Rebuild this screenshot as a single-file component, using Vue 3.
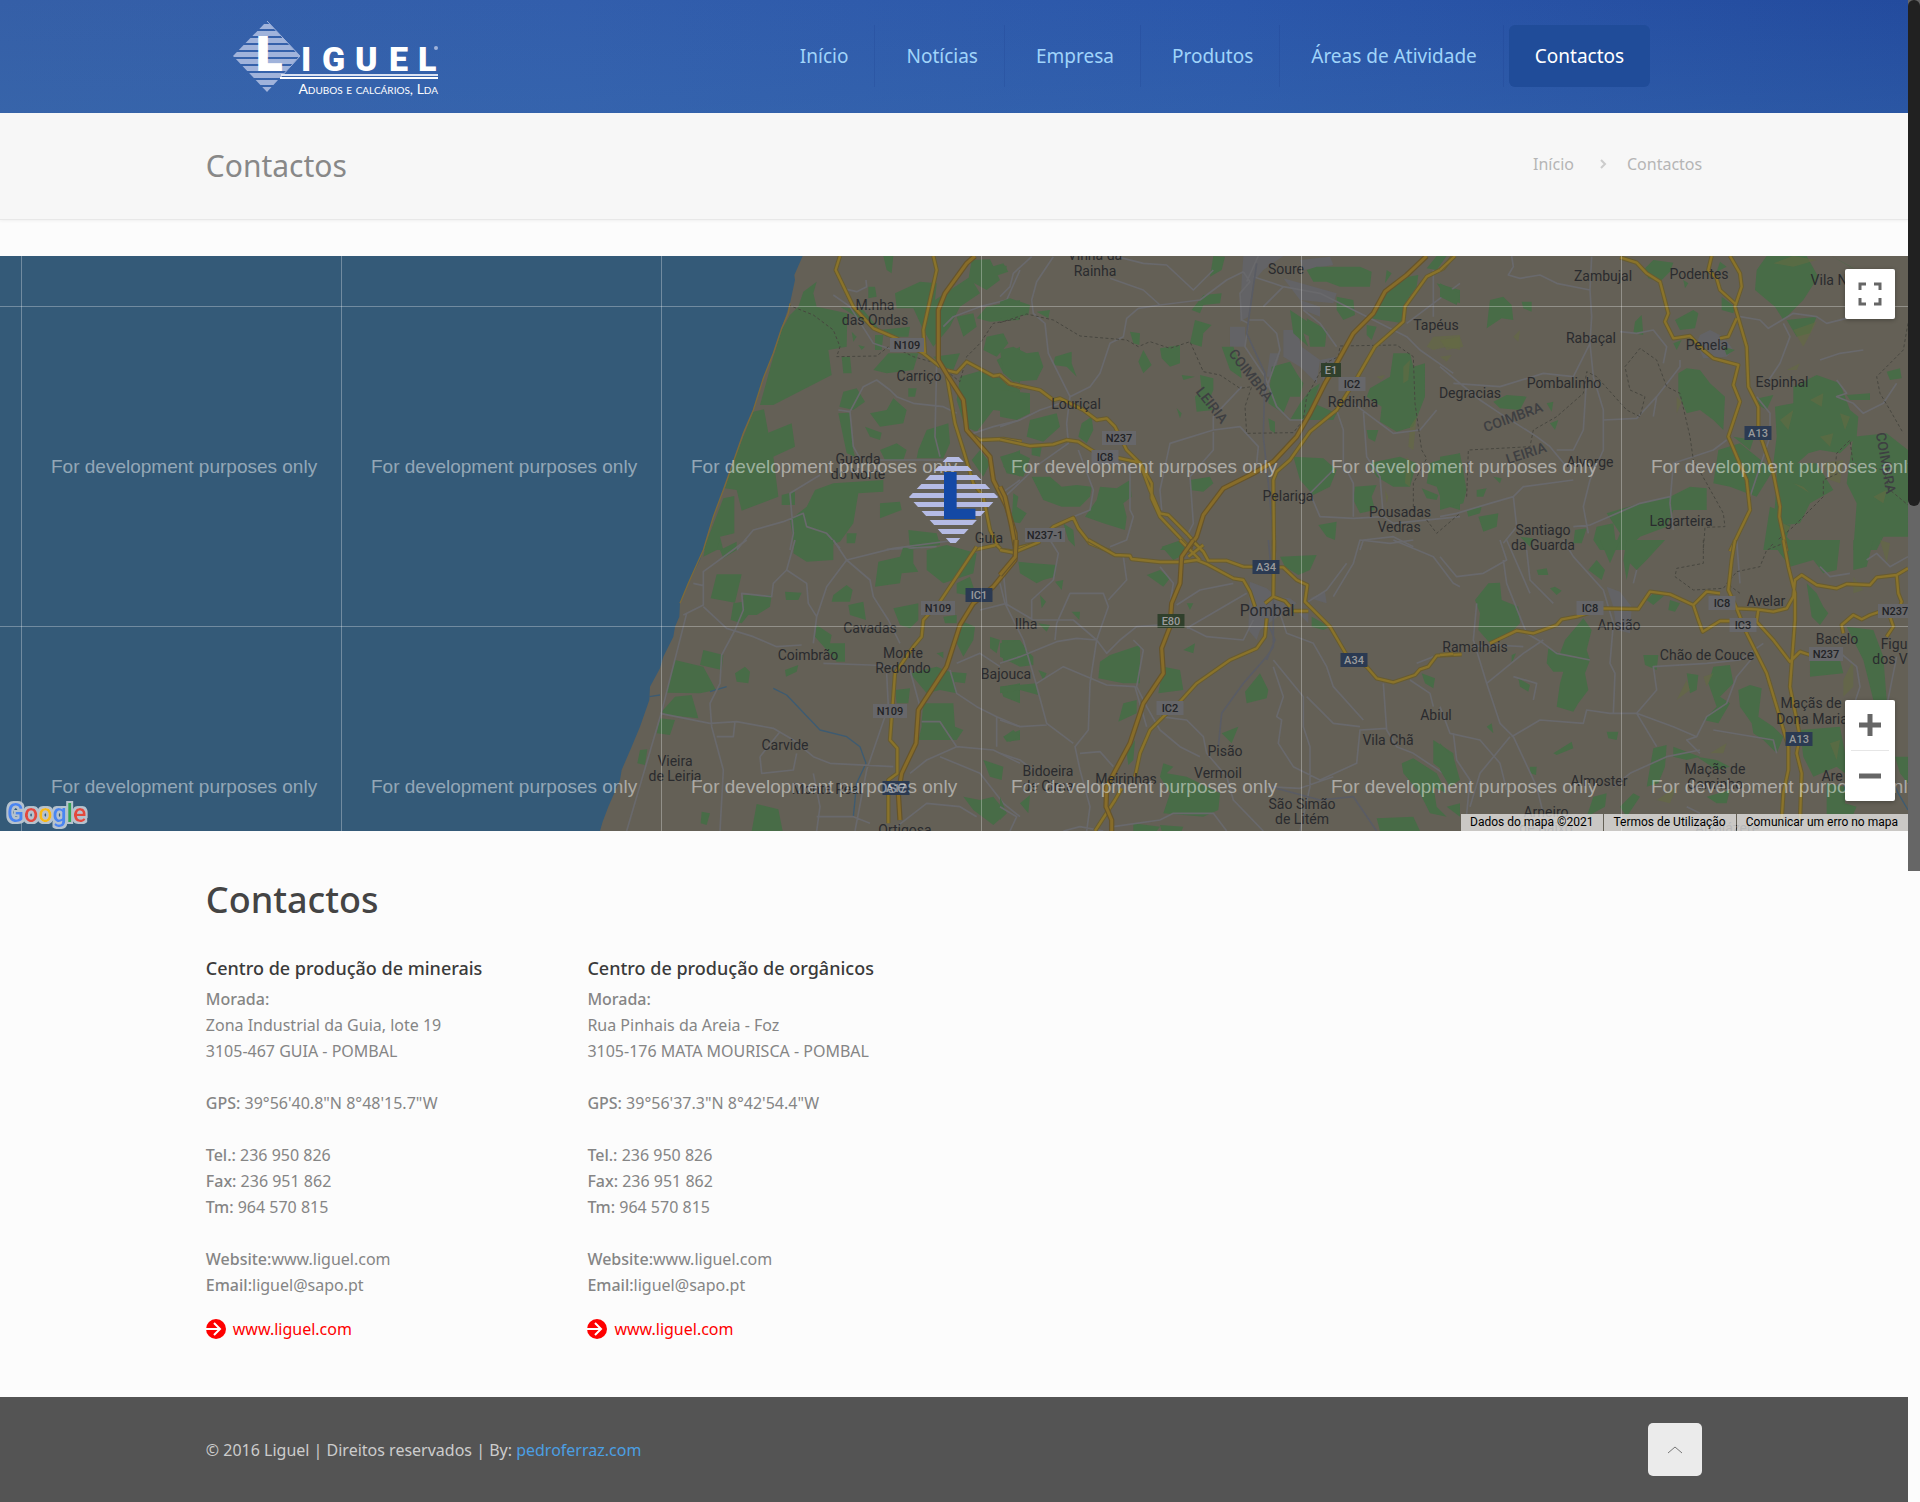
<script setup>
const navItems = [
  { label: 'Início' },
  { label: 'Notícias' },
  { label: 'Empresa' },
  { label: 'Produtos' },
  { label: 'Áreas de Atividade' },
  { label: 'Contactos', active: true },
]

const centres = [
  {
    title: 'Centro de produção de minerais',
    address: ['Zona Industrial da Guia, lote 19', '3105-467 GUIA - POMBAL'],
    gps: '39°56\'40.8"N 8°48\'15.7"W',
  },
  {
    title: 'Centro de produção de orgânicos',
    address: ['Rua Pinhais da Areia - Foz', '3105-176 MATA MOURISCA - POMBAL'],
    gps: '39°56\'37.3"N 8°42\'54.4"W',
  },
]

const watermarkX = [51, 371, 691, 1011, 1331, 1651]
const watermarkY = [473, 793]
const gridX = [21, 341, 661, 981, 1301, 1621]
const gridY = [306, 626]
const stripes = [0, 1, 2, 3, 4, 5, 6, 7, 8, 9]

// Each tile is drawn in its own space, three units to a map pixel.
const tiles = [
  {
    x: 560, y: 250,
    green: 'M770 95L730 125 715 170 690 195 665 240 640 320 600 465 640 465 815 375 805 300 860 290 862 190 770 170 760 130ZM580 485L612 478 625 548 695 520 705 590 640 620 655 740 545 782 530 720 495 715 520 635ZM490 745L523 738 523 850 480 860 490 900H430ZM970 18H1000L995 70 980 60ZM1235 30L1290 28 1320 90 1280 120 1225 90ZM1280 55L1330 40 1345 65 1300 80ZM1005 130L1080 95 1130 100 1125 150 1230 80 1260 130 1200 170 1170 230 1120 290 1090 240 1060 175 1010 175ZM840 170L910 180 960 240 1050 230 1045 260 980 260 930 225ZM1190 200L1240 190 1250 230 1210 260ZM1280 170L1380 150V210L1290 215 1250 205ZM1280 260L1330 250 1345 280 1310 320 1270 300ZM1310 330L1380 290V400L1330 370ZM1200 380L1270 360 1330 390 1380 420V490L1300 480 1250 545 1215 530 1190 450ZM1120 320L1200 310 1180 360 1150 350ZM850 425L890 415 915 455 880 480 838 470ZM835 490L870 488 880 600 885 620 860 610ZM930 490L980 480 1000 445 1040 480 1030 520 960 530ZM915 530L965 548 960 570 930 560ZM1075 600L1100 540 1165 520 1170 580 1150 625H1070ZM960 600L1010 580 1040 600 1030 630H975ZM820 700L970 690 970 725 895 730 880 820 840 875 760 900H705L690 810 740 770 765 720ZM665 735L705 725V765H665ZM1340 620L1380 600V680L1330 650ZM960 760L1020 755 1025 780 960 805ZM1045 840L1130 850 1140 885 1050 900ZM1260 600L1290 640 1270 680 1235 630ZM940 360L985 310 1075 310 1060 360 980 370ZM845 320H870L875 370H850ZM945 255H970L965 300H945ZM860 850H890L885 880H860ZM1045 415H1070L1065 440H1045ZM925 110H945L950 140 925 145ZM895 285L915 290 905 300ZM875 245L890 260 880 275Z',
    minor: 'M530 900L580 840 670 815 730 790 740 830 800 850 840 895M690 900L700 850 690 730 780 675M835 480L870 485 910 410 950 390 990 420 1010 440 1060 460 1150 470 1190 490M870 485L880 590 900 625M860 118L890 125 920 110 918 90M1380 510L1300 530 1240 550M1130 340L1125 560 1140 620M960 630H1200M1150 230L1180 200 1260 170 1340 150 1380 60M1310 740L1380 690M820 135L870 170 940 280 1000 300M1130 890L980 898',
    border: 'M685 165L760 195 820 240 840 290 830 320 950 318 985 290M1000 290L1060 320 1130 340 1200 395 1220 320 1260 280 1300 220 1380 205',
    road: 'M840 18L827 60 880 170 940 235 1010 265 1090 310 1140 350M1160 375L1185 520 1210 600 1240 700 1270 740 1290 840 1315 890M1120 18L1130 60 1110 150 1090 240 1095 310M1155 360L1190 368 1220 335 1300 378 1320 375 1345 400 1385 412M1225 550L1260 570 1330 567 1385 575M1240 900L1310 885',
    motorway: 'M1245 18L1220 40 1155 130 1135 180V330L1165 380 1210 450 1220 540 1290 620 1300 690 1340 770 1365 850 1368 904',
  },
  {
    x: 1000, y: 250,
    city: 'M730 18H850L790 60 760 95 745 200 720 215 725 90ZM690 230H735V290H690ZM850 240H890L905 290 960 330 950 400 900 350 850 320ZM810 310H840L820 380H800ZM850 85L1010 130 1000 160 900 150ZM900 150L960 170 960 200 910 180ZM900 30L990 20 1000 45 910 60ZM960 330L1010 320 970 400Z',
    green: 'M0 45L20 48 18 65 0 68ZM0 155L30 145 90 165 85 195 0 205ZM110 185L150 180 145 205ZM0 300L40 290 80 310 115 305 130 350 110 390 40 395 10 370ZM165 320L215 305 215 340 230 380 200 350 160 345ZM0 420L90 430V490L50 510 0 500ZM90 510L170 490 180 530 130 575 80 560ZM245 520L275 500 280 540 260 580 235 560ZM95 595L125 590 120 620 95 615ZM0 620L50 605 90 625 70 680 20 670ZM40 730L55 740 50 770 80 790 60 820 35 815ZM95 680L150 680 185 710 230 705 275 710 270 740 240 770 185 770 130 750ZM300 710L350 715 390 690 395 740 370 760 380 800 375 840 310 820 255 800 290 750ZM190 820L220 840 225 890 205 870ZM390 245L420 250 418 285 400 280ZM585 210L635 225 610 250 605 290 570 280ZM480 295L540 285V340L510 350 485 325ZM430 300L455 345 430 370 415 335ZM600 375L640 385V420L625 455 640 480 590 485 585 440 605 420ZM665 290L700 290 720 340 725 385 690 360ZM530 475L545 490 540 505ZM570 690L630 680 640 700 610 725 570 720ZM640 18L675 20 665 60 630 80ZM610 135L665 130 660 160 610 165 600 190 575 180ZM920 60L950 50 1080 50 1115 65 1110 110 1020 110 980 95 940 95ZM1160 60L1175 70 1155 100ZM1200 85L1255 75 1250 110 1215 160 1210 220 1110 205 1150 140ZM1310 18H1340L1310 60 1280 55ZM1310 100L1380 120V160L1340 145ZM1010 140L1060 150 1065 195 1030 210 1010 180ZM870 180L930 220 930 260 910 250 925 290 880 250ZM920 205L980 240 975 290 930 290ZM1100 225L1130 230 1115 270 1100 255ZM815 350L870 335 890 370 910 400 900 440 870 440 850 490 805 460ZM930 420L960 400 940 460 1010 490 1000 510 870 510 900 460ZM1180 310L1230 310 1240 350 1275 340V440L1240 530 1190 545 1140 515 1145 470 1100 440 1110 415 1170 380ZM1100 540H1135L1125 575 1105 565ZM805 505L825 515 825 550 810 540ZM880 620L970 625 1010 660 990 710 940 735 900 690ZM1105 640L1200 620 1250 640 1230 710 1180 710 1130 680ZM1290 640L1380 610V780L1330 765 1310 710 1280 700ZM1065 710L1130 705 1115 740 1125 780 1080 790 1060 750ZM1265 715L1315 735 1310 750 1280 745ZM955 825L1010 815 1005 870 980 860ZM490 890L545 870 550 900H480ZM545 375L585 380 550 390Z',
    scrub: 'M1280 290L1300 260 1380 255V300L1340 290 1300 300ZM1210 350L1230 330 1225 390 1210 400ZM1230 530L1250 500 1240 600 1225 590ZM1220 620L1235 640 1230 710 1215 700ZM1155 720L1165 740 1160 760ZM1320 320L1355 315 1340 335ZM1130 380L1155 375 1145 390Z',
    minor: 'M0 140L30 110 40 70 95 20M160 20L110 95 95 150 100 190 135 220 145 310 210 440 200 520 205 580 120 640 20 735M210 440L270 410 300 370 330 280 370 260 380 205 415 175 480 165 600 150 680 90 730 65M480 165L430 120 330 85M350 20L430 40 500 45 580 120 640 60M730 65L750 95 720 130 725 210 745 220 735 290 795 380 830 470 870 510 910 510M745 210L790 210 830 250 840 300 790 440M760 80L850 110 960 130 1080 190 1220 260 1260 300 1360 370M850 110L790 170M910 180L960 220 1010 290M0 530L60 510 120 480 210 450M235 600L280 720 270 780 220 800M390 640L390 780 400 800 380 870 330 890M640 540L510 580 480 720 485 780M640 545L640 600 570 680 580 820 560 860M640 540L720 530 775 590 770 640M725 410L640 500V540M1010 480L1030 540 1030 640 1060 700 1060 800M1090 480L1100 620 1140 680 1150 800M1000 660L930 730 960 800 1060 805 1150 800 1180 820 1380 800M1080 900L1090 870 1180 860 1240 890M1300 60V200M1220 220L1380 100M1060 460L1180 550 1260 540 1310 480M775 18L740 95',
    rail: 'M795 370L790 560 805 700 820 860M770 40L740 250 795 370',
    border: 'M0 218L80 192 160 210 240 258 380 270 415 290 450 275 510 295 570 275 610 365 660 375 720 415 755 410 735 470 740 550 880 548 910 510 920 440 975 340 1015 320 1020 288 1190 285 1240 320 1245 460 1265 600 1280 625 1240 700V800M1280 810L1310 850 1380 790',
    road: 'M0 375L30 400 120 420 160 450 180 445 250 480 290 510 320 505 345 530 380 600 420 640 450 720 480 790 505 795 560 850 608 904M0 568L90 588 160 583 200 570 235 575 290 610 420 638 455 700V745L480 800 575 900M48 895L110 880 160 830 220 803 235 835 270 880 330 904M1360 18L1330 55 1280 80 1215 170 1210 215 1125 290 1070 385 1010 480 930 545 870 630 830 665 820 690 822 904',
    motorway: 'M0 710L15 740 35 830 48 904M1280 18L1220 75 1155 125 1120 190 1060 250 1010 340 975 400 930 490 890 560 820 635 760 670 670 715 610 795 590 860 560 904',
  },
  {
    x: 1440, y: 250,
    city: 'M780 255L810 240 850 260 880 300 860 320 790 325 770 280Z',
    green: 'M0 100L60 130 50 165 0 140ZM150 150L190 140 215 165 220 210 185 205 140 235 145 190ZM245 155L275 155 275 185 250 175ZM615 55L640 30 700 38 690 65 660 95 625 85ZM705 210L760 180 775 190 765 235 720 240ZM585 215L605 195 610 255 580 250ZM840 35L860 50 830 65ZM730 90L745 100 735 115ZM950 60L980 18H1100L1135 80 1090 150 1030 210 1005 170 945 120ZM845 140L885 170 880 190 845 180ZM1040 210L1130 200 1110 250 1070 260ZM1175 18L1250 60 1230 50ZM1340 365L1380 355 1385 385 1350 390ZM700 280L725 270 710 300ZM850 290L885 300 860 315ZM715 370L740 355 780 360 810 400 855 440 850 540 820 510 780 480 740 490 715 430ZM160 455L200 435 260 440 240 480 180 475ZM320 460L340 455 335 485ZM330 520L355 510 345 540ZM955 445L1000 435 980 480 955 465ZM1005 470L1060 460 1060 410 1130 375 1200 400 1230 480 1255 500 1250 560 1200 610 1140 600 1105 610 1060 650 1000 640 1010 560ZM1220 435L1290 430 1290 450 1230 450ZM835 600L900 580 1000 660 950 740 870 710 820 700ZM1010 640L1130 640 1180 720 1110 760 1080 820 1000 830 1010 700ZM1240 560L1340 550 1404 600V860L1330 860 1310 900H1240L1250 760 1220 700ZM990 770L1060 800 1040 860 1080 900H970ZM80 780L125 770 120 790 85 800ZM115 800L175 790 170 830 130 845ZM0 620L60 610 80 720 70 760 0 780ZM110 720L140 715 130 740 110 740ZM500 790L600 760 690 740 750 710 800 715 800 780 700 780 680 830 600 860 560 900H520L540 850ZM470 830L520 820 530 900H480L460 870ZM405 840L440 835 425 880 400 880ZM240 860L280 865 270 890ZM160 680L185 685 180 700ZM880 560L940 570 930 600Z',
    scrub: 'M1000 40L1060 18 1130 30 1060 50ZM0 270L60 260 70 290 20 300ZM1060 240L1130 215 1090 290ZM1020 510L1060 480 1045 540ZM1110 450L1150 430 1145 470ZM1140 560L1180 550 1170 590ZM1200 490L1230 500 1215 540ZM710 440L725 455 710 490ZM1010 810L1050 830 1040 850ZM1150 640L1210 630 1200 700 1170 690ZM220 260L240 240 235 275ZM1300 740L1340 720 1330 760ZM1060 700L1090 710 1110 730ZM1040 360L1080 340 1070 360Z',
    minor: 'M215 18L220 50 205 75 240 85 300 75 350 100 450 120 455 20M450 120L455 200 450 280 400 380 310 370 180 410 40 400M450 280L460 380 490 480V600L450 690 430 770 445 850M440 380L430 540 400 600 350 600M490 510L590 505 650 440 720 350V330M540 245L590 250 640 240 680 290 670 340M900 200L960 210 985 235 1060 190 1130 200 1160 220 1240 200M1030 220L1050 260 1020 340 980 400M1140 330L1200 310 1270 300M1190 390L1220 430 1190 440 1240 460 1270 490 1330 460 1370 400M0 350L120 450 180 490 290 560 330 590 380 650M860 570L820 600 700 640 690 760 700 840M0 800L50 790 150 760 220 740 250 710 400 690M220 740L230 830 190 880M990 560L930 740M400 830L450 825 600 760 690 740M950 440L990 490 990 560M640 500L650 440',
    border: 'M80 740L85 600 270 590 280 540 350 500 430 430 440 365 470 380 560 480 600 500 615 440 570 420 555 350 600 295 650 330 680 410 720 430 750 560 760 630 800 700 850 790 855 830 795 832 790 900M1404 220L1390 300 1310 380 1320 430 1350 480 1390 550M1185 660L1190 610 1230 570 1240 650 1150 690 1150 740 1060 830 990 890M1240 640L1330 660 1350 720 1404 765',
    road: 'M540 22L590 38 620 70 660 95 685 190 675 215 700 265 750 258 790 300 820 325 895 345 880 405 900 455 865 560 920 690 930 780 870 904M870 18L900 70 905 110 885 170 920 290 925 410 955 470V540L1000 670 1020 770 1018 800 1040 904M815 18L805 60 830 85 840 120 890 165M890 205L865 260 840 265M0 60L45 18',
    motorway: '',
  },
  {
    x: 560, y: 540,
    green: 'M440 0L480 0 470 30 430 50ZM480 30L530 5 530 30 490 55ZM470 103H545L525 188 452 175ZM550 165L635 165 630 200 590 225 565 225 545 250 512 240 520 190 550 185ZM675 155L725 158 715 180 678 180ZM705 0H820V60L740 65 700 40ZM860 135L878 150 870 185 815 185 820 165ZM865 195L910 185 918 240 870 225ZM955 65L1020 50 1030 20 1060 30 1060 70 1075 95 1025 100 1020 130 945 140ZM1000 205L1075 190 1075 240 1050 265 1020 255ZM1050 10L1140 0 1140 15ZM1100 30L1160 15 1250 40 1240 100 1150 130 1100 90ZM1190 130L1230 110 1250 170 1190 160ZM1150 230L1190 225 1190 250 1155 250ZM1210 245L1245 260 1240 300 1210 350 1190 310ZM345 360L430 380 468 450 420 460 320 458ZM430 330L490 345 485 390 420 375ZM525 400L555 380 570 395 565 430 530 425ZM675 390L715 375 710 395 678 410ZM770 255L815 285 810 310 855 310V365L830 365 800 330 765 290ZM305 515L345 470 395 465 415 535 320 525ZM300 535L345 540 330 585 290 580ZM240 630L262 628 255 675 232 670ZM1050 400L1130 380 1180 400 1190 460 1140 450 1100 460ZM1005 450L1050 445 1045 490H1010ZM1090 490L1180 490 1185 560 1210 570 1190 600 1075 600 1085 560 1085 545ZM1290 290L1320 300 1310 340 1290 325ZM1325 300L1380 300V360L1330 365ZM1130 340L1150 335 1150 355ZM1165 395L1220 400 1215 430 1180 425ZM1320 440L1380 430V490L1330 470ZM1330 590L1380 570V600L1340 605ZM1270 660L1330 680 1325 720 1290 710ZM1210 770L1260 780 1300 770 1340 820 1300 855 1240 810ZM425 815L450 820 440 855 422 850ZM590 792L655 808 668 873H575Z',
    minor: 'M560 0L430 95V195L370 225M430 200L500 265 580 290 650 320 725 315M705 0L680 90 640 130 635 170 545 160 550 210 525 270 485 345 480 430 450 490 455 560 490 690 480 873M680 90L740 130 745 190 770 230 760 310M770 230L800 140 860 60M820 0L860 60 930 120 940 170 985 240 1020 310M860 60L1000 25 1190 0M380 220L305 515 200 873M300 520L450 550 530 545 640 565 700 600 760 650 810 670 1000 680M470 590H520L525 545M790 370L930 375 1020 380M600 650L605 700 700 690 710 640M660 575L600 650M980 400L985 500 920 690 885 873M1085 545L1140 545 1190 620 1100 660 1050 700M1380 670L1300 630 1190 620M1140 650L1260 700 1330 790 1380 830M1010 860L1100 790 1200 800 1250 830M770 873L780 800 760 700M770 830L880 830 930 850M1190 370L1260 340 1320 380M1170 390L1190 460 1250 500 1310 530 1380 560M1310 530V620M400 130L430 137M1260 210L1340 190 1330 100M1050 390L1080 500',
    water: 'M268 470L300 465M450 455L500 440M640 445L680 465 780 570 860 590 900 620 918 670 890 730 880 830',
    border: '',
    road: 'M1250 20L1140 185 1090 240 1085 290 1060 320 1005 400 990 600 1012 625V700L985 720V850M1310 15L1325 30 1366 36',
    motorway: 'M1368 0L1365 60 1300 140 1240 190 1200 255 1160 380 1075 510 1068 610 1025 700 1015 760 1020 840',
  },
  {
    x: 1000, y: 540,
    city: 'M750 125L800 145 830 170 870 175 890 190 820 240 780 270 770 300 745 270ZM930 175L975 155 980 190ZM895 220L925 215 925 250Z',
    green: 'M55 65L100 70 170 75 165 110 130 120 110 130 60 100ZM165 125L190 120 185 150ZM120 165L138 185 125 205ZM215 215L240 215 238 240ZM115 250L150 255 140 275ZM0 310L60 300 80 330 100 350V375L60 380 0 350ZM330 345L420 315V430L370 430 295 415 300 365ZM485 20L545 0 560 40 520 60ZM440 105L480 90 510 115 490 140ZM560 190L580 190 570 210ZM550 330L585 310 580 340ZM490 380L540 390 550 450 475 460ZM370 490L410 480 410 520 355 545ZM0 440L110 430 115 465 60 450 0 460ZM10 590L40 570 60 590 30 605ZM780 400L805 450 800 475 740 490 735 455ZM665 580L715 560 695 610ZM380 640L405 600 400 660 385 675ZM490 670L520 680 500 700 560 710 660 760 655 810 610 830 490 820 510 760 480 710ZM60 790L90 765 85 820ZM0 770L20 820 0 840ZM400 850L480 860 470 873H400ZM480 855L550 860 545 873H485ZM840 50L950 45 930 90 895 105 855 80ZM935 230L990 260 970 270 935 260ZM1265 400L1305 415 1300 445 1275 430ZM1300 600L1360 640 1365 720 1300 670ZM1205 670L1240 655 1310 700 1340 760 1300 740 1310 800 1340 830 1290 820 1260 760 1210 700ZM1130 835L1240 830 1260 873H1140ZM1340 800L1380 790V830ZM115 390L140 400 130 420Z',
    minor: 'M0 130L15 190 100 240 220 240 290 300 270 430 265 570 225 620 240 690 270 800 260 873M95 240L95 180 160 120 175 40 150 0M165 300L170 250 210 160 310 160 325 200 290 300 320 340 360 300 410 260 475 255M15 190L70 300 105 420 140 550 220 610M0 370L60 350 170 305 230 295 290 300M110 430L190 380 320 435 405 440 440 560M370 50L380 120 325 180M480 80L520 130 510 190M530 195L600 150 700 130M560 260L620 290 730 300 760 240M560 265L740 160M400 300L430 330 410 440 440 500 480 570 540 620 600 650M480 530L560 540 610 590 620 640 680 710 700 780 790 873M820 380L850 470 830 530 845 540 835 610 880 680 960 720 1070 670 1080 570 1160 565M920 470L1000 550 1080 560M820 360L910 470V560L930 620V740L900 873M840 220L860 280 940 310 980 380 1000 440 1090 540M1150 430L1160 570 1190 620 1240 640 1330 700M1230 420L1290 460 1300 500M1000 170L1060 70 1080 0 1170 10 1240 0M925 185L980 150 1040 70M1180 0L1300 50 1360 130 1380 140M1250 370L1300 350M0 640L60 660 100 690M240 640L300 635 340 680M310 873L240 860 190 873M340 860L480 840 520 820 640 820 680 873M800 740L900 745 1000 710M0 800L50 830 30 873M0 540L60 560 140 555',
    rail: 'M805 0L820 160 820 320 800 350 730 430 665 520 655 620M800 240L825 300 800 360M810 740L960 780 1060 770 1130 873',
    border: '',
    road: 'M265 0L345 45 390 47 395 57 480 66 545 66 590 60 620 72 700 115 730 120 750 155 765 200M540 0L560 20 600 60M565 50L610 15M580 5L610 35 625 62 680 62 730 80 850 82 890 120 922 135 915 185 990 260 1040 345 1100 380 1130 415 1180 427 1245 405 1260 388 1285 380 1310 347 1385 343M822 0L820 170 795 190M820 170L855 183 870 200M880 213H925M800 235L795 290 770 325 690 360 590 430 540 485 490 530 450 570 420 640 405 710M365 745L345 780 285 873M0 30L40 38 120 5',
    motorway: 'M48 0L46 50 0 105M580 0L545 50 540 130 515 190 510 260 485 325 490 400 430 490 390 610 320 740 318 800 335 840V873',
  },
  {
    x: 1440, y: 540,
    city: 'M500 140L540 155 575 200 570 280 530 270 520 200Z',
    green: 'M145 130L180 128 185 180 235 200 240 250 200 290 150 310 115 270 120 220 105 180ZM330 145L345 140 365 152 350 165ZM290 90L320 85 325 105 295 105ZM430 235L455 270 440 330 450 360 435 400 445 450 415 490 400 515 350 500 360 430 370 395 340 395 320 370 325 325 360 340 375 300ZM215 345L228 340 215 370ZM235 415L270 435 265 455 240 440ZM445 90L470 60 495 90 485 120ZM480 0H540L510 70ZM560 0L675 0 620 60 590 90 570 70 560 120 550 60ZM990 0H1200L1190 90 1150 100 1120 60 1050 80ZM1240 0H1300L1280 80 1240 90ZM1100 130L1130 160 1150 200 1165 220 1140 255 1115 230ZM620 180L640 160 675 165 640 195ZM690 180L720 190 705 215 685 210ZM610 345L655 345 650 390 615 375ZM740 400L775 405 770 450 750 460ZM820 380L870 375 880 430 840 470 870 490 835 550 790 540 830 500 805 430ZM895 450L930 435 965 445 955 530 1000 560 1030 590 1010 640 970 600 940 580 935 550 900 500ZM1110 350L1200 360 1210 400 1110 410ZM1220 260L1300 270 1330 350 1340 480 1300 480 1270 360ZM140 560L155 550 160 580ZM340 640L395 605 400 625 350 645ZM500 575L535 575 530 600 505 595ZM640 625L680 615 675 680 655 730 620 740ZM270 680H290L288 705 270 700ZM0 610L40 650 60 720 30 740 0 690ZM700 620L780 650 740 660 700 650ZM770 650L830 660 870 680 830 690ZM460 770L500 760 495 800 440 830ZM540 800L580 760 600 770 560 830ZM1080 570L1200 560 1215 640 1215 700 1190 680 1120 710 1090 650ZM1160 730L1215 740 1215 790 1250 800 1240 822H1160ZM1365 650L1404 650V730L1380 700ZM800 770L870 750 860 790 830 790Z',
    scrub: 'M1210 420L1240 360 1240 440 1210 470ZM1320 0L1350 10 1340 70ZM740 420L750 450 710 480ZM790 410L820 400 800 440ZM810 640L860 610 850 640ZM1170 610L1200 600 1190 660ZM650 780L710 740 690 790ZM1240 110L1270 150 1240 160Z',
    minor: 'M0 50L50 110 130 100 200 60 180 0M190 60L200 130 260 280 310 310 350 340 450 360M110 190L100 300 140 430 180 550 220 590 290 740 310 822M215 590L300 540 430 550 440 510 510 520 590 520 700 560 770 590M370 0L400 50 490 150 520 250 510 370 525 400 520 520M260 30L270 120 340 190M590 90L580 130M590 520L650 450 640 380 800 370 900 360 970 310M0 500L30 580 120 600 180 670 200 750M40 580L50 660 90 720 80 822M210 590L120 700 90 800M140 430L250 340 310 300M520 740L570 700 680 650 780 630M590 520L650 620M780 640L740 600 770 590 800 530 860 490 890 410 940 350M890 0L900 130M1280 60L1310 40 1350 80 1404 50M1140 80L1170 110 1230 100M1190 330L1250 380 1260 440 1240 500M1370 350L1340 500M820 570L1000 600 1010 640M100 320L160 315 250 320M270 160L200 0M740 800L780 820M280 480L290 430 220 410',
    water: 'M1350 710L1375 760 1404 810',
    border: 'M790 0V70L710 85 705 110 760 150 850 145 890 95 960 80 980 30 1030 10M900 160L860 130',
    road: 'M0 345L40 342M150 310L230 272 280 280 350 255 365 238 410 230 490 205 595 207 630 155 690 163 760 195 800 155 840 160M760 195L775 240 788 275 840 243 890 243M885 0L875 60 865 150 890 205 920 280 980 400 1010 500 1045 620V690L1030 760 1025 840M1030 0L1045 80 1065 160V240L1050 440 1080 590 1070 640 1085 700 1080 840M890 205L950 208 1000 215 1040 205 1060 170 1065 120 1085 105 1130 135 1190 145 1220 132 1290 135 1310 112 1370 105 1404 85M1370 105L1375 160 1385 185 1380 200M955 210L950 245 1000 300 1050 365 1080 335 1110 345M1210 280L1205 255 1240 225 1265 238 1290 225 1320 215M1350 230L1360 260 1340 290',
    motorway: '',
  },
]

const places = [
  ['M.nha', 875, 310], ['das Ondas', 875, 325], ['Carriço', 919, 381], ['Guarda', 858, 464], ['do Norte', 858, 479],
  ['Guia', 989, 543], ['Vinha da', 1095, 260], ['Rainha', 1095, 276], ['Soure', 1286, 274], ['Tapéus', 1436, 330],
  ['Redinha', 1353, 407], ['Louriçal', 1076, 409], ['Pelariga', 1288, 501], ['Pousadas', 1400, 517], ['Vedras', 1399, 532],
  ['Zambujal', 1603, 281], ['Podentes', 1699, 279], ['Vila N', 1829, 285], ['Rabaçal', 1591, 343], ['Penela', 1707, 350],
  ['Pombalinho', 1564, 388], ['Espinhal', 1782, 387], ['Degracias', 1470, 398], ['Alvorge', 1590, 467], ['Lagarteira', 1681, 526],
  ['Santiago', 1543, 535], ['da Guarda', 1543, 550], ['Cavadas', 870, 633], ['Coimbrão', 808, 660], ['Monte', 903, 658],
  ['Redondo', 903, 673], ['Bajouca', 1006, 679], ['Carvide', 785, 750], ['Vieira', 675, 766], ['de Leiria', 675, 781],
  ['Monte Real', 827, 794], ['Ortigosa', 905, 835], ['Ilha', 1026, 629], ['Ramalhais', 1475, 652], ['Abiul', 1436, 720],
  ['Vila Chã', 1388, 745], ['Pisão', 1225, 756], ['Vermoil', 1218, 778], ['Bidoeira', 1048, 776], ['de Cima', 1048, 791],
  ['Meirinhas', 1126, 784], ['São Simão', 1302, 809], ['de Litém', 1302, 824], ['Ansião', 1619, 630], ['Avelar', 1766, 606],
  ['Bacelo', 1837, 644], ['Figu', 1894, 649], ['dos V', 1890, 664], ['Chão de Couce', 1707, 660], ['Maçãs de', 1811, 708],
  ['Dona Maria', 1812, 724], ['Maçãs de', 1715, 774], ['Caminho', 1715, 789], ['Are', 1832, 781], ['Almoster', 1599, 786],
  ['Arneiro', 1546, 817], ['de Baixo', 1546, 833], ['Alvaiázere', 1727, 833],
]

const regions = [
  ['COIMBRA', 1251, 375, 52], ['LEIRIA', 1212, 405, 52], ['COIMBRA', 1513, 417, -20],
  ['LEIRIA', 1526, 453, -18], ['COIMBRA', 1886, 463, 80],
]

const shields = [
  ['N109', 907, 345], ['IC2', 1352, 384], ['N237', 1119, 438], ['IC8', 1105, 457], ['N237-1', 1045, 535],
  ['N109', 938, 608], ['N109', 890, 711], ['IC2', 1170, 708], ['IC8', 1590, 608], ['IC8', 1722, 603],
  ['IC3', 1743, 625], ['N237', 1895, 611], ['N237', 1826, 654],
  ['E1', 1331, 370, 'euro'], ['E80', 1171, 621, 'euro'],
  ['A13', 1758, 433, 'blue'], ['IC1', 979, 595, 'blue'], ['A17', 896, 788, 'blue'], ['A34', 1266, 567, 'blue'],
  ['A34', 1354, 660, 'blue'], ['A13', 1799, 739, 'blue'],
]
const shieldWidth = (label) => label.length * 7 + (label.length > 5 ? -2 : 6)
</script>

<template>
  <div class="window">
    <div class="page">
      <header class="top">
        <div class="container top-inner">
          <a class="logo" href="#" aria-label="Liguel">
            <svg width="206" height="78" viewBox="0 0 206 78">
              <defs>
                <clipPath id="logo-diamond"><path d="M0 35L34 0 67 35 34 71Z" /></clipPath>
              </defs>
              <g clip-path="url(#logo-diamond)" fill="#a0b3db">
                <rect v-for="s in stripes" :key="s" x="0" :y="s * 7 + 3" width="67" height="5" />
              </g>
              <path d="M34 0L67 35 48 56" fill="none" stroke="#a0b3db" />
              <text class="logo-initial" x="23" y="50">L</text>
              <text class="logo-name" y="50" x="68 89 122 156 185">IGUEL</text>
              <path d="M48 54H205" stroke="#dbe3f3" stroke-width="2" />
              <path d="M47 57H205" stroke="#fff" stroke-width="2" />
              <circle cx="203" cy="27" r="2" fill="#a0b3db" />
              <text class="logo-tag" x="205" y="73" text-anchor="end">Adubos e calcários, Lda</text>
            </svg>
          </a>
          <nav>
            <ul class="menu">
              <li v-for="item in navItems" :key="item.label">
                <a href="#" :class="{ active: item.active }">{{ item.label }}</a>
              </li>
            </ul>
          </nav>
        </div>
      </header>

      <section class="subheader">
        <div class="container subheader-inner">
          <h1>Contactos</h1>
          <ol class="crumbs">
            <li><a href="#">Início</a></li>
            <li class="sep" aria-hidden="true">
              <svg width="8" height="10" viewBox="0 0 8 10"><path d="M2 1L6 5 2 9" fill="none" stroke="#ccc" stroke-width="2" /></svg>
            </li>
            <li>Contactos</li>
          </ol>
        </div>
      </section>

      <section class="map">
        <svg class="map-canvas" viewBox="0 256 1908 575" preserveAspectRatio="xMidYMid slice">
          <rect x="0" y="256" width="1908" height="575" fill="#646056" />
          <g v-for="t in tiles" :key="t.x + '-' + t.y" :transform="`translate(${t.x} ${t.y}) scale(.33333)`" fill="none" stroke-linejoin="round">
            <path :d="t.city" fill="#636366" />
            <path :d="t.green" fill="#486c47" />
            <path :d="t.scrub" fill="#646a42" opacity=".6" />
            <path :d="t.water" stroke="#3d5b72" stroke-width="4" />
            <path :d="t.minor" stroke="#69696c" stroke-width="5" />
            <path :d="t.rail" stroke="#5a5c64" stroke-width="5" />
            <path :d="t.border" stroke="#47463f" stroke-width="3" stroke-dasharray="9 7" />
          </g>
          <g v-for="t in tiles" :key="'r' + t.x + '-' + t.y" :transform="`translate(${t.x} ${t.y}) scale(.33333)`" fill="none" stroke-linejoin="round">
            <path :d="t.road" stroke="#685c30" stroke-width="13" />
            <path :d="t.road" stroke="#8a732a" stroke-width="7" />
            <path :d="t.motorway" stroke="#66542b" stroke-width="16" />
            <path :d="t.motorway" stroke="#876c29" stroke-width="9" />
          </g>
          <g transform="translate(560 250) scale(.33333)">
            <path
              d="M-1700 0H734L728 18 712 55 703 75 705 90 690 160 665 235 640 310 610 385 580 480 550 550 520 635 490 720 460 800 430 900 420 930 385 1000 360 1060 358 1100 345 1130 340 1160 310 1220 300 1255 270 1310 268 1350 240 1430 215 1490 185 1560 180 1590 145 1670 128 1715 118 1750H-1700Z"
              fill="#345a78" />
            <path d="M690 160L685 190 665 235 640 310 610 385 580 480 550 550 520 635 490 720 460 800 430 900 385 1000 360 1060" fill="none" stroke="#7d6a3a" stroke-width="4" />
          </g>
          <g class="regions">
            <text v-for="(r, i) in regions" :key="i" :x="r[1]" :y="r[2] + 5" :transform="`rotate(${r[3]} ${r[1]} ${r[2]})`">{{ r[0] }}</text>
          </g>
          <g class="shields">
            <g v-for="(s, i) in shields" :key="i" :class="s[3]">
              <rect :x="s[1] - shieldWidth(s[0]) / 2" :y="s[2] - 7" :width="shieldWidth(s[0])" height="14" />
              <text :x="s[1]" :y="s[2] + 4">{{ s[0] }}</text>
            </g>
          </g>
          <g class="places">
            <text v-for="p in places" :key="p[0] + p[1]" :x="p[1]" :y="p[2]">{{ p[0] }}</text>
            <text class="town" x="1267" y="616">Pombal</text>
          </g>
          <g stroke="#fff" stroke-opacity=".3">
            <path v-for="x in gridX" :key="x" :d="`M${x + 0.5} 256V831`" />
            <path v-for="y in gridY" :key="y" :d="`M0 ${y + 0.5}H1908`" />
          </g>
          <g class="watermarks">
            <template v-for="y in watermarkY" :key="y">
              <text v-for="x in watermarkX" :key="x" :x="x" :y="y">For development purposes only</text>
            </template>
          </g>
          <defs>
            <clipPath id="pin-diamond"><path d="M909 497L953 451 998 497 953 546Z" /></clipPath>
          </defs>
          <g clip-path="url(#pin-diamond)" fill="#b5bbe4">
            <rect v-for="s in stripes" :key="s" x="909" :y="s * 9 + 457" width="89" height="5" />
          </g>
          <text class="pin-letter" x="941" y="519">L</text>
        </svg>

        <a class="google" href="#" aria-label="Google">
          <svg width="86" height="32" viewBox="0 0 86 32">
            <defs>
              <filter id="halo" x="-10%" y="-20%" width="120%" height="140%">
                <feMorphology in="SourceAlpha" operator="dilate" radius="2" result="wide" />
                <feFlood flood-color="#b5c2cd" />
                <feComposite in2="wide" operator="in" result="edge" />
                <feMerge><feMergeNode in="edge" /><feMergeNode in="SourceGraphic" /></feMerge>
              </filter>
            </defs>
            <text class="google-name" x="3" y="23" filter="url(#halo)"><tspan fill="#4a86f0">G</tspan><tspan fill="#e2483c">o</tspan><tspan fill="#f5bb17">o</tspan><tspan fill="#4a86f0">g</tspan><tspan fill="#36a556">l</tspan><tspan fill="#e2483c">e</tspan></text>
          </svg>
        </a>
        <button class="control fullscreen" type="button" aria-label="Ecrã inteiro">
          <svg width="24" height="24" viewBox="0 0 24 24"><path d="M2 8V2H8M16 2H22V8M22 16V22H16M8 22H2V16" fill="none" stroke="#666" stroke-width="3" /></svg>
        </button>
        <div class="control zoom">
          <button type="button" aria-label="Aumentar zoom">
            <svg width="24" height="24" viewBox="0 0 24 24"><path d="M12 1V23M1 12H23" stroke="#666" stroke-width="5" /></svg>
          </button>
          <button type="button" aria-label="Diminuir zoom">
            <svg width="24" height="24" viewBox="0 0 24 24"><path d="M1 12H23" stroke="#666" stroke-width="5" /></svg>
          </button>
        </div>
        <div class="attribution">
          <span>Dados do mapa ©2021</span>
          <a href="#">Termos de Utilização</a>
          <a href="#">Comunicar um erro no mapa</a>
        </div>
      </section>

      <main class="container content">
        <h2>Contactos</h2>
        <div class="columns">
          <section v-for="c in centres" :key="c.title" class="column">
            <h3>{{ c.title }}</h3>
            <p>
              <b>Morada:</b><br />
              <template v-for="line in c.address" :key="line">{{ line }}<br /></template>
            </p>
            <p><b>GPS:</b> {{ c.gps }}</p>
            <p>
              <b>Tel.:</b> 236 950 826<br />
              <b>Fax:</b> 236 951 862<br />
              <b>Tm:</b> 964 570 815
            </p>
            <p><b>Website:</b>www.liguel.com<br /><b>Email:</b>liguel@sapo.pt</p>
            <a class="site-link" href="#">
              <svg width="20" height="20" viewBox="0 0 20 20">
                <circle cx="10" cy="10" r="10" fill="#fe0000" />
                <path d="M0 10H14M8 4L14 10 8 16" fill="none" stroke="#fff" stroke-width="2" />
              </svg>
              www.liguel.com
            </a>
          </section>
        </div>
      </main>

      <footer class="footer">
        <div class="container footer-inner">
          <p>© 2016 Liguel | Direitos reservados | By: <a href="#">pedroferraz.com</a></p>
          <button class="to-top" type="button" aria-label="Voltar ao topo">
            <svg width="16" height="10" viewBox="0 0 16 10"><path d="M1 8L8 2 15 8" fill="none" stroke="#777" /></svg>
          </button>
        </div>
      </footer>
    </div>
    <div class="scrollbar" aria-hidden="true">
      <div class="track"></div>
      <div class="thumb"></div>
    </div>
  </div>
</template>

<style>
body {
  margin: 0;
  background: #fcfcfc;
}
</style>

<style scoped>
.window {
  display: flex;
  min-height: 100vh;
  font: 400 16px/26px "Noto Sans", sans-serif;
  color: #858585;
}
.page {
  flex: 1;
  min-width: 0;
  display: flex;
  flex-direction: column;
}
.scrollbar {
  position: relative;
  width: 12px;
}
.track {
  height: 58%;
  background: #666;
}
.thumb {
  position: absolute;
  top: 0;
  width: 12px;
  height: 506px;
  border-radius: 6px;
  background: #212121;
}
.container {
  box-sizing: border-box;
  width: 80%;
  margin: 0 auto;
  padding: 0 15px;
}
a {
  color: inherit;
  text-decoration: none;
}
ul,
ol,
h1,
h2,
h3 {
  margin: 0;
  padding: 0;
  list-style: none;
}
button {
  display: grid;
  place-items: center;
  padding: 0;
  border: 0;
  cursor: pointer;
}

.top {
  background: linear-gradient(to top, rgba(60, 112, 176, 0.3), transparent), linear-gradient(to right, #355fa7, #325eac 30%, #2b57aa 65%, #234b9e);
}
.top-inner {
  display: flex;
  justify-content: space-between;
  align-items: center;
  height: 113px;
}
.logo {
  margin: 6px 0 0 27px;
}
.logo svg {
  display: block;
}
.logo-initial {
  font: 900 48px Inter, sans-serif;
  fill: #fff;
}
.logo-name {
  font: 900 34px Roboto, sans-serif;
  fill: #fff;
}
.logo-tag {
  font: 400 14px Lato, sans-serif;
  font-variant: small-caps;
  fill: #fff;
}
.menu {
  display: flex;
  gap: 5px;
  margin: 0 52px 2px 0;
}
.menu li {
  border-right: 1px solid rgba(20, 50, 130, 0.15);
}
.menu li:last-child {
  border: 0;
}
.menu a {
  display: block;
  padding: 0 26px;
  border-radius: 6px;
  font-size: 19px;
  line-height: 62px;
  color: #a0d4fa;
}
.menu a.active {
  background: #204c99;
  color: #fff;
}

.subheader {
  background: #f7f7f7;
  border-bottom: 1px solid #e8e8e8;
  box-shadow: 0 1px 3px rgba(0, 0, 0, 0.05);
}
.subheader-inner {
  display: flex;
  justify-content: space-between;
  align-items: center;
  height: 106px;
}
h1 {
  font-size: 30px;
  font-weight: 400;
  line-height: 40px;
  color: #888;
}
.crumbs {
  display: flex;
  align-items: center;
  margin-bottom: 4px;
  color: #b5b5b5;
}
.sep {
  display: flex;
  padding: 0 20px 0 25px;
}

.map {
  position: relative;
  height: 575px;
  margin-top: 36px;
  overflow: hidden;
}
.map-canvas {
  display: block;
  width: 100%;
  height: 100%;
}
.places text {
  font: 400 14px Roboto, sans-serif;
  text-anchor: middle;
  fill: #2a2b2e;
}
.places .town {
  font-size: 16px;
}
.regions text {
  font: 500 14px Roboto, sans-serif;
  text-anchor: middle;
  fill: #3e3f42;
}
.shields rect {
  fill: #67676a;
}
.shields text {
  font: 500 11px Roboto, sans-serif;
  text-anchor: middle;
  fill: #222326;
}
.shields .blue rect {
  fill: #2b3a52;
}
.shields .euro rect {
  fill: #30402c;
}
.shields .blue text,
.shields .euro text {
  fill: #9a9b9c;
}
.watermarks text {
  font: 400 19px "Liberation Sans", sans-serif;
  fill: rgba(255, 255, 255, 0.48);
}
.pin-letter {
  font: 900 64px Inter, sans-serif;
  fill: #1449a5;
}
.google {
  position: absolute;
  left: 4px;
  bottom: 0;
}
.google svg {
  display: block;
}
.google-name {
  font: 500 25px Roboto, sans-serif;
}
.control {
  position: absolute;
  right: 13px;
  width: 50px;
  border-radius: 2px;
  background: #fff;
  box-shadow: 0 1px 4px rgba(0, 0, 0, 0.3);
}
.fullscreen {
  top: 13px;
  height: 50px;
}
.zoom {
  bottom: 30px;
}
.zoom button {
  width: 50px;
  height: 50px;
  background: none;
}
.zoom button + button {
  margin-top: 1px;
}
.zoom button + button::before {
  content: "";
  position: absolute;
  top: 50px;
  width: 38px;
  height: 1px;
  background: #e6e6e6;
}
.attribution {
  position: absolute;
  right: 0;
  bottom: 0;
  display: flex;
  gap: 1px;
  font: 400 12px/17px Roboto, sans-serif;
  color: #000;
}
.attribution > * {
  padding: 0 10px 0 9px;
  background: rgba(245, 245, 245, 0.7);
}

.content {
  flex: 1;
  padding-top: 47px;
  padding-bottom: 55px;
}
h2 {
  margin-bottom: 33px;
  font-size: 36px;
  font-weight: 500;
  line-height: 44px;
  color: #444;
}
.columns {
  display: flex;
  margin: 0 -15px;
}
.column {
  box-sizing: border-box;
  width: 25%;
  padding: 0 15px;
}
h3 {
  margin-bottom: 5px;
  font-size: 18px;
  font-weight: 500;
  line-height: 26px;
  color: #3a3a3a;
  white-space: nowrap;
}
.column p {
  margin: 0 0 26px;
}
.column p:last-of-type {
  margin-bottom: 18px;
}
b {
  font-weight: 500;
}
.site-link {
  display: flex;
  align-items: center;
  gap: 7px;
  color: #fe0000;
}

.footer {
  background: #545454;
  color: #ccc;
}
.footer-inner {
  display: flex;
  justify-content: space-between;
  align-items: center;
  height: 105px;
}
.footer p {
  margin: 0;
}
.footer p a {
  color: #4b9fe3;
}
.to-top {
  width: 54px;
  height: 53px;
  border-radius: 5px;
  background: #ebebeb;
}
</style>
